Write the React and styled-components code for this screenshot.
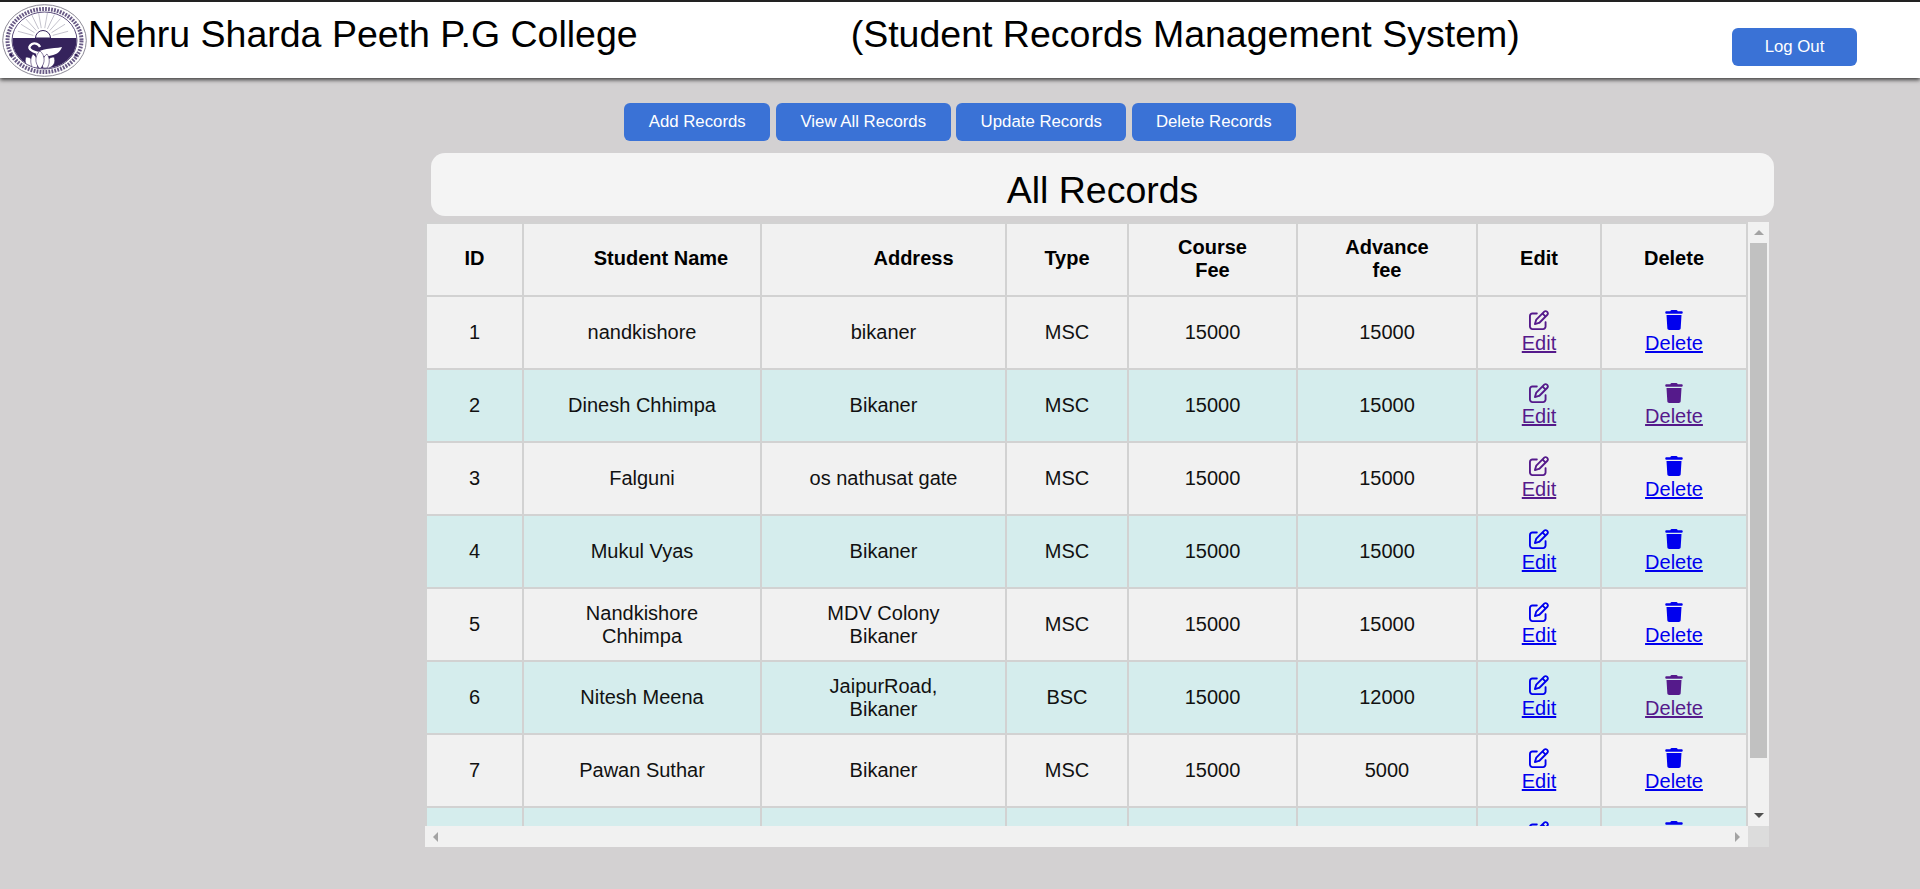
import React from "react";
import styled, { createGlobalStyle } from "styled-components";
import { FaRegPenToSquare, FaTrash } from "react-icons/fa6";

const GlobalStyle = createGlobalStyle`
  html, body {
    margin: 0;
    padding: 0;
    background: #d3d1d2;
    font-family: "Liberation Sans", Arial, sans-serif;
    overflow: hidden;
  }
`;

const Header = styled.header`
  height: 76px;
  border-top: 2px solid #222;
  background: #fff;
  box-shadow: 0 2px 4px rgba(0, 0, 0, 0.7);
  display: flex;
  align-items: flex-start;
  padding-left: 2px;
`;

const LogoBox = styled.svg`
  width: 85px;
  height: 73px;
  margin-top: 2px;
  flex: none;
`;

const CollegeName = styled.h1`
  margin: 11px 0 0 1px;
  font-size: 37.5px;
  line-height: 42px;
  font-weight: 400;
  color: #000;
  white-space: nowrap;
`;

const SystemName = styled(CollegeName)`
  margin-left: 213px;
`;

const ActionButton = styled.button`
  height: 38px;
  padding: 0 0 1px;
  border: none;
  border-radius: 6px;
  background: #3a72d6;
  color: #fff;
  font-family: inherit;
  font-size: 16.8px;
  white-space: nowrap;
`;

const LogoutButton = styled(ActionButton)`
  width: 125px;
  margin: 26px 63px 0 auto;
`;

const Main = styled.main`
  padding: 25px 0 0 425px;
`;

const NavRow = styled.nav`
  display: flex;
  justify-content: center;
  gap: 5.5px;
  width: 1070px;
`;

const NavButton = styled(ActionButton)`
  width: ${({ $w }) => $w}px;
`;

const TitlePanel = styled.div`
  width: 1343px;
  height: 63px;
  margin: 12px 0 6px 6px;
  background: #f4f4f4;
  border-radius: 14px;
  text-align: center;
  font-size: 37.5px;
  line-height: 74px;
  color: #000;
  overflow: hidden;
`;

const TableShell = styled.div`
  width: 1344px;
`;

const TopRow = styled.div`
  display: flex;
  height: 604px;
`;

const ScrollArea = styled.div`
  width: 1323px;
  overflow: hidden;
`;

const VerticalBar = styled.div`
  width: 21px;
  background: #f1f1f1;
  display: flex;
  flex-direction: column;
`;

const BarTrack = styled.div`
  flex: 1;
  padding: 0 2px;
`;

const BarThumb = styled.div`
  height: 515px;
  background: #c1c1c1;
`;

const BottomRow = styled.div`
  display: flex;
  height: 21px;
`;

const HorizontalBar = styled.div`
  width: 1323px;
  background: #f1f1f1;
  display: flex;
  justify-content: space-between;
`;

const Corner = styled.div`
  width: 21px;
  background: #dcdcdc;
`;

const ArrowButton = styled.div`
  width: 21px;
  height: 21px;
  flex: none;
  display: flex;
  align-items: center;
  justify-content: center;

  &::before {
    content: "";
    width: 0;
    height: 0;
    border: 5px solid transparent;
    ${({ $dir, $color }) => {
      if ($dir === "up") return `border-top: 0; border-bottom-color: ${$color};`;
      if ($dir === "down") return `border-bottom: 0; border-top-color: ${$color};`;
      if ($dir === "left") return `border-left: 0; border-right-color: ${$color};`;
      return `border-right: 0; border-left-color: ${$color};`;
    }}
  }
`;

const Table = styled.table`
  width: 1323px;
  table-layout: fixed;
  border-collapse: separate;
  border-spacing: 2px;
  background: #d2d2d2;
  font-size: 20px;
  color: #111;
`;

const HeadCell = styled.th`
  height: 71px;
  padding: 0 0 2px ${({ $shift }) => $shift || 0}px;
  box-sizing: border-box;
  background: #f1f1f1;
  color: #000;
  text-align: center;
  font-weight: 700;
  line-height: 23px;
  white-space: pre-line;
`;

const Row = styled.tr`
  background: ${({ $tinted }) => ($tinted ? "#d5eded" : "#f1f1f1")};
`;

const Cell = styled.td`
  height: 71px;
  padding: 0;
  text-align: center;
  line-height: 23px;
  white-space: pre-line;
`;

const IconLink = styled.a`
  display: inline-flex;
  flex-direction: column;
  align-items: center;
  min-height: 45px;
  color: ${({ $visited }) => ($visited ? "#551a8b" : "#0000ee")};
  text-decoration: underline;
  line-height: 23px;

  svg {
    display: block;
    margin-bottom: 2px;
  }
`;

const columns = [
  { label: "ID", width: 95 },
  { label: "Student Name", width: 236, shift: 38 },
  { label: "Address", width: 243, shift: 60 },
  { label: "Type", width: 120 },
  { label: "Course\nFee", width: 167 },
  { label: "Advance\nfee", width: 178 },
  { label: "Edit", width: 122 },
  { label: "Delete", width: 144 },
];

const records = [
  { id: 1, name: "nandkishore", address: "bikaner", type: "MSC", course: 15000, advance: 15000, editSeen: true },
  { id: 2, name: "Dinesh Chhimpa", address: "Bikaner", type: "MSC", course: 15000, advance: 15000, editSeen: true, deleteSeen: true },
  { id: 3, name: "Falguni", address: "os nathusat gate", type: "MSC", course: 15000, advance: 15000, editSeen: true },
  { id: 4, name: "Mukul Vyas", address: "Bikaner", type: "MSC", course: 15000, advance: 15000 },
  { id: 5, name: "Nandkishore\nChhimpa", address: "MDV Colony\nBikaner", type: "MSC", course: 15000, advance: 15000 },
  { id: 6, name: "Nitesh Meena", address: "JaipurRoad,\nBikaner", type: "BSC", course: 15000, advance: 12000, deleteSeen: true },
  { id: 7, name: "Pawan Suthar", address: "Bikaner", type: "MSC", course: 15000, advance: 5000 },
];

function CollegeLogo() {
  const ink = "#35235c";
  return (
    <LogoBox viewBox="0 0 85 73" aria-label="College crest">
      <defs>
        <clipPath id="disc">
          <ellipse cx="42.5" cy="36.5" rx="32" ry="28" />
        </clipPath>
      </defs>
      <ellipse cx="42.5" cy="36.5" rx="41.8" ry="35.8" fill="#fff" stroke="#8d8a96" strokeWidth="1" />
      <ellipse cx="42.5" cy="36.5" rx="37" ry="31.5" fill="none" stroke={ink} strokeWidth="4" strokeDasharray="1.8 1.2" opacity="0.75" />
      <ellipse cx="42.5" cy="36.5" rx="32.5" ry="28.5" fill="#fff" stroke={ink} strokeWidth="0.8" />
      <g clipPath="url(#disc)">
        <g stroke="#a5a2b2" strokeWidth="0.6">
          {[-75, -58, -42, -26, -10, 10, 26, 42, 58, 75].map((a) => (
            <line key={a} x1="41" y1="24" x2="41" y2="8" transform={`rotate(${a} 41 34)`} />
          ))}
        </g>
        <path d="M33.5 34a7.5 7.5 0 0 1 15 0z" fill="#fff" stroke={ink} strokeWidth="1" />
        <rect x="5" y="34" width="75" height="32" fill={ink} />
        <path d="M36 49C29 47 24 44 30 40 33 38.5 37 40 38 43" fill="none" stroke="#fff" strokeWidth="2.4" />
        <path d="M34 50c4-6 16-5 26-7-2 6-7 8-13 9H34z" fill="#fff" />
        <path d="M24 53c5 0 9 4 10 11h-5c-5-2-7-6-5-11zM52 53c-5 0-9 4-10 11h5c5-2 7-6 5-11z" fill="#fff" stroke={ink} strokeWidth="0.6" />
        <path d="M31 50c4 3 6 8 4 14h-4c-3-4-3-10 0-14zM45 50c-4 3-6 8-4 14h4c3-4 3-10 0-14z" fill="#fff" stroke={ink} strokeWidth="0.6" />
        <path d="M38 47c5 4 6 12 0 18-6-6-5-14 0-18z" fill="#fff" stroke={ink} strokeWidth="0.6" />
      </g>
      <circle cx="9" cy="51" r="1.6" fill={ink} />
      <circle cx="74" cy="51" r="1.6" fill={ink} />
    </LogoBox>
  );
}

export default function App() {
  return (
    <>
      <GlobalStyle />
      <Header>
        <CollegeLogo />
        <CollegeName>Nehru Sharda Peeth P.G College</CollegeName>
        <SystemName as="h2">(Student Records Management System)</SystemName>
        <LogoutButton>Log Out</LogoutButton>
      </Header>
      <Main>
        <NavRow>
          <NavButton $w={146}>Add Records</NavButton>
          <NavButton $w={175}>View All Records</NavButton>
          <NavButton $w={170}>Update Records</NavButton>
          <NavButton $w={164}>Delete Records</NavButton>
        </NavRow>
        <TitlePanel>All Records</TitlePanel>
        <TableShell>
          <TopRow>
            <ScrollArea>
              <Table>
                <colgroup>
                  {columns.map((c) => (
                    <col key={c.label} width={c.width} />
                  ))}
                </colgroup>
                <thead>
                  <tr>
                    {columns.map((c) => (
                      <HeadCell key={c.label} $shift={c.shift}>
                        {c.label}
                      </HeadCell>
                    ))}
                  </tr>
                </thead>
                <tbody>
                  {records.map((r) => (
                    <Row key={r.id} $tinted={r.id % 2 === 0}>
                      <Cell>{r.id}</Cell>
                      <Cell>{r.name}</Cell>
                      <Cell>{r.address}</Cell>
                      <Cell>{r.type}</Cell>
                      <Cell>{r.course}</Cell>
                      <Cell>{r.advance}</Cell>
                      <Cell>
                        <IconLink href="#edit" $visited={r.editSeen}>
                          <FaRegPenToSquare size={20} />
                          Edit
                        </IconLink>
                      </Cell>
                      <Cell>
                        <IconLink href="#delete" $visited={r.deleteSeen}>
                          <FaTrash size={20} />
                          Delete
                        </IconLink>
                      </Cell>
                    </Row>
                  ))}
                  {/* next row is only peeking in above the fold, just its icons show */}
                  <Row $tinted>
                    <Cell />
                    <Cell />
                    <Cell />
                    <Cell />
                    <Cell />
                    <Cell />
                    <Cell>
                      <IconLink href="#edit">
                        <FaRegPenToSquare size={20} />
                      </IconLink>
                    </Cell>
                    <Cell>
                      <IconLink href="#delete">
                        <FaTrash size={20} />
                      </IconLink>
                    </Cell>
                  </Row>
                </tbody>
              </Table>
            </ScrollArea>
            <VerticalBar>
              <ArrowButton $dir="up" $color="#a3a3a3" />
              <BarTrack>
                <BarThumb />
              </BarTrack>
              <ArrowButton $dir="down" $color="#505050" />
            </VerticalBar>
          </TopRow>
          <BottomRow>
            <HorizontalBar>
              <ArrowButton $dir="left" $color="#a3a3a3" />
              <ArrowButton $dir="right" $color="#a3a3a3" />
            </HorizontalBar>
            <Corner />
          </BottomRow>
        </TableShell>
      </Main>
    </>
  );
}
